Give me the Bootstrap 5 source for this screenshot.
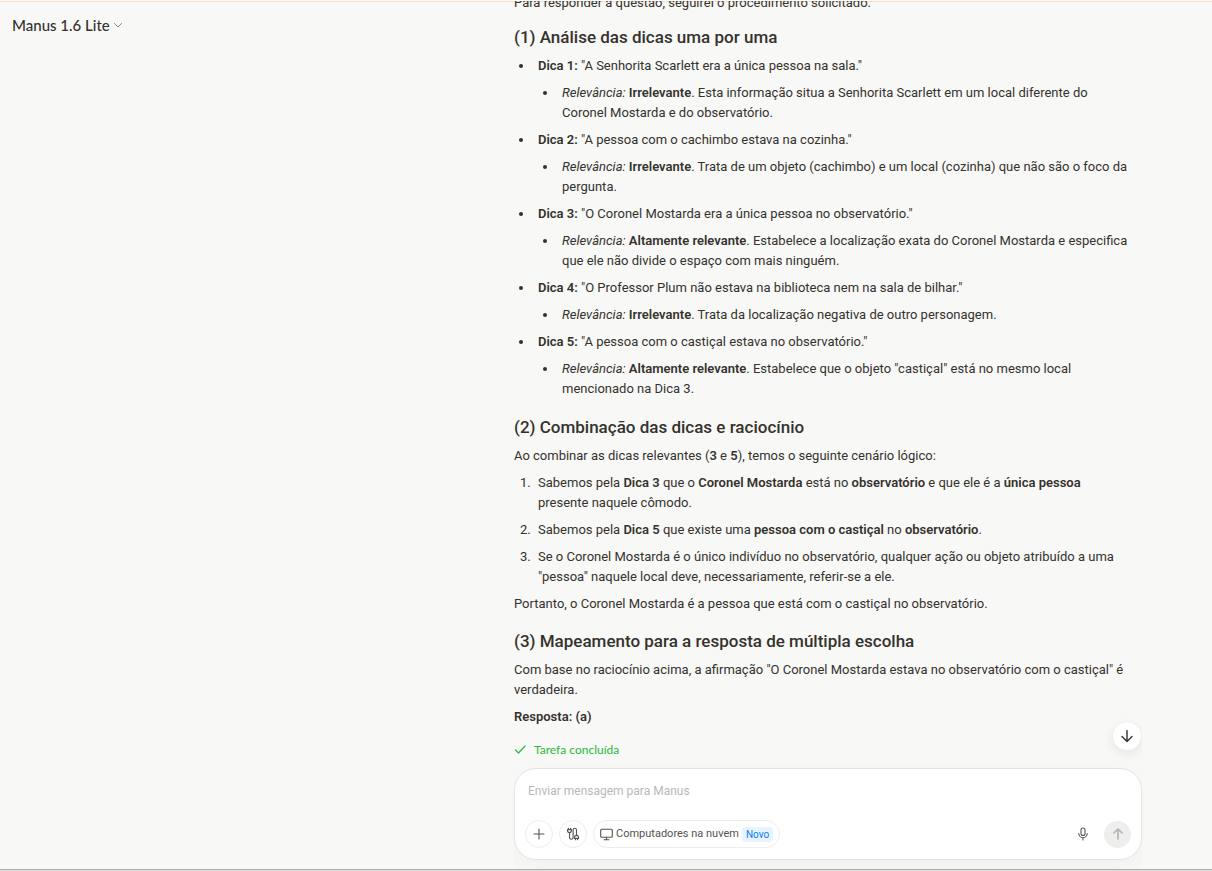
<!DOCTYPE html>
<html lang="pt-BR">
<head>
<meta charset="utf-8">
<meta name="viewport" content="width=device-width, initial-scale=1">
<title>Manus</title>
<link href="https://cdn.jsdelivr.net/npm/bootstrap@5.3.0/dist/css/bootstrap.min.css" rel="stylesheet">
<style>
  body { background: #f8f8f7; color: #34322d; font-family: Roboto, "Open Sans", sans-serif; font-size: 13px; line-height: 20px; }
  .shell { display: grid; grid-template: minmax(0, 1fr) / minmax(0, 514fr) minmax(0, 628px) minmax(0, 70fr); border-top: 1px solid #fcfbf9; border-bottom: 1px solid #dededa; box-shadow: inset 0 1px #f0e0d0, inset 0 -1px #b0b0ad; }
  .model-btn { font-family: Lato, sans-serif; font-size: 15px; line-height: 24px; font-weight: 500; color: #34322d; gap: 2px; }
  .thread { min-height: 0; }
  .thread > * { flex-shrink: 0; }
  .thread h3 { font-size: 17px; line-height: 24px; font-weight: 500; margin: 8px 0 7px; }
  .thread p { margin: 0 0 7px; }
  .thread strong { font-weight: 600; }
  .thread ul, .thread ol { margin: 0; padding-left: 20px; }
  .thread ul { list-style: disc; }
  .thread > ul { margin-bottom: 1px; }
  .thread li { margin-bottom: 7px; padding-left: 4px; }
  .thread li > ul { margin-top: 7px; }
  .thread > ul, .thread > ol { padding-right: 12px; }
  .status-row { padding: 13px 0 8px; }
  .done { color: #25ba3b; font-family: Lato, sans-serif; font-size: 12px; }
  .composer { flex-shrink: 0; border: 1px solid #e4e4e6; border-radius: 22px; box-shadow: 0 10px 24px rgba(0,0,0,.03); min-height: 92px; margin-bottom: 10px; }
  .composer .form-control { font-size: 12px; line-height: 20px; color: #34322d; padding: 12px 13px 0; resize: none; box-shadow: none; }
  .composer .form-control::placeholder { color: #b9b9b7; opacity: 1; }
  .tools { gap: 6px; padding: 0 10px 11px; }
  .tool { width: 28px; height: 28px; border: 1px solid #ededec; color: #535350; }
  .pill { height: 28px; border: 1px solid #ededec; color: #535350; font-size: 11px; line-height: 16px; padding: 0 6px; gap: 3px; }
  .tag-new { background: #e9f3fe; color: #0081f2; font-size: 10px; line-height: 15px; border-radius: 4px; }
  .mic { color: #535350; margin-right: 8px; }
  .send, .send:hover { width: 27px; height: 27px; background: #eeeeed; color: #b5b5b2; }
  .jump { right: 0; bottom: 17px; width: 30px; height: 30px; border: 1px solid #f0f0ef; color: #34322d; box-shadow: 0 4px 10px rgba(0,0,0,.07); }
  svg { fill: none; stroke: currentColor; stroke-linecap: round; stroke-linejoin: round; }
</style>
</head>
<body>
<div class="shell vh-100 overflow-hidden">
  <header class="px-2 pt-2">
    <button type="button" class="btn model-btn border-0 d-flex align-items-center px-1 py-1">Manus 1.6 Lite
      <svg width="12" height="12" viewBox="0 0 12 12"><path stroke="#858481" d="M2.5 4.5 6 8l3.5-3.5"/></svg>
    </button>
  </header>
  <main class="d-flex flex-column overflow-hidden">
    <article class="thread flex-grow-1 d-flex flex-column justify-content-end overflow-hidden">
      <p class="mb-1">Para responder a questão, seguirei o procedimento solicitado.</p>
      <h3>(1) Análise das dicas uma por uma</h3>
      <ul>
        <li><strong>Dica 1:</strong> "A Senhorita Scarlett era a única pessoa na sala."
          <ul><li><em>Relevância:</em> <strong>Irrelevante</strong>. Esta informação situa a Senhorita Scarlett em um local diferente do Coronel Mostarda e do observatório.</li></ul></li>
        <li><strong>Dica 2:</strong> "A pessoa com o cachimbo estava na cozinha."
          <ul><li><em>Relevância:</em> <strong>Irrelevante</strong>. Trata de um objeto (cachimbo) e um local (cozinha) que não são o foco da pergunta.</li></ul></li>
        <li><strong>Dica 3:</strong> "O Coronel Mostarda era a única pessoa no observatório."
          <ul><li><em>Relevância:</em> <strong>Altamente relevante</strong>. Estabelece a localização exata do Coronel Mostarda e especifica que ele não divide o espaço com mais ninguém.</li></ul></li>
        <li><strong>Dica 4:</strong> "O Professor Plum não estava na biblioteca nem na sala de bilhar."
          <ul><li><em>Relevância:</em> <strong>Irrelevante</strong>. Trata da localização negativa de outro personagem.</li></ul></li>
        <li><strong>Dica 5:</strong> "A pessoa com o castiçal estava no observatório."
          <ul><li><em>Relevância:</em> <strong>Altamente relevante</strong>. Estabelece que o objeto "castiçal" está no mesmo local mencionado na Dica 3.</li></ul></li>
      </ul>
      <h3>(2) Combinação das dicas e raciocínio</h3>
      <p>Ao combinar as dicas relevantes (<strong>3</strong> e <strong>5</strong>), temos o seguinte cenário lógico:</p>
      <ol>
        <li>Sabemos pela <strong>Dica 3</strong> que o <strong>Coronel Mostarda</strong> está no <strong>observatório</strong> e que ele é a <strong>única pessoa</strong> presente naquele cômodo.</li>
        <li>Sabemos pela <strong>Dica 5</strong> que existe uma <strong>pessoa com o castiçal</strong> no <strong>observatório</strong>.</li>
        <li>Se o Coronel Mostarda é o único indivíduo no observatório, qualquer ação ou objeto atribuído a uma "pessoa" naquele local deve, necessariamente, referir-se a ele.</li>
      </ol>
      <p>Portanto, o Coronel Mostarda é a pessoa que está com o castiçal no observatório.</p>
      <h3>(3) Mapeamento para a resposta de múltipla escolha</h3>
      <p>Com base no raciocínio acima, a afirmação "O Coronel Mostarda estava no observatório com o castiçal" é verdadeira.</p>
      <p class="mb-0"><strong>Resposta: (a)</strong></p>
    </article>
    <div class="status-row position-relative">
      <div class="done d-flex align-items-center gap-2">
        <svg width="12" height="12" viewBox="0 0 12 12" stroke-width="1.2"><path d="M1.5 6 4.5 9 11 2"/></svg>Tarefa concluída
      </div>
      <button type="button" class="btn jump position-absolute bg-white rounded-circle p-0 d-flex align-items-center justify-content-center" aria-label="Ir para o fim">
        <svg width="14" height="14" viewBox="0 0 14 14" stroke-width="1.4"><path d="M7 1.5v11M2 7.5l5 5 5-5"/></svg>
      </button>
    </div>
    <form class="composer bg-white d-flex flex-column justify-content-between">
      <textarea class="form-control border-0 bg-transparent" rows="1" aria-label="Mensagem" placeholder="Enviar mensagem para Manus"></textarea>
      <div class="tools d-flex align-items-center">
        <button type="button" class="btn tool rounded-circle p-0 d-flex align-items-center justify-content-center" aria-label="Adicionar">
          <svg width="12" height="12" viewBox="0 0 12 12" stroke-width="1.1"><path d="M6 1v10M1 6h10"/></svg>
        </button>
        <button type="button" class="btn tool rounded-circle p-0 d-flex align-items-center justify-content-center" aria-label="Conectores">
          <svg width="14" height="14" viewBox="0 0 14 14" stroke-width="1.1"><path d="M1.5 2.6h4v1a2 2 0 0 1-4 0zM2.5 1.2v1.2M4.5 1.2v1.2M3.5 5.8v4.6a1.8 1.8 0 0 0 3.6 0V3a1.7 1.7 0 0 1 3.4 0v5M8.5 11.4h4v-1a2 2 0 0 0-4 0zM9.5 12.8v-1.2M11.5 12.8v-1.2"/></svg>
        </button>
        <button type="button" class="btn pill rounded-pill d-flex align-items-center">
          <svg width="13" height="13" viewBox="0 0 13 13" stroke-width="1.1"><rect x=".7" y="1.2" width="11.6" height="8" rx="1"/><path d="M6.5 9.2v2.6M4 11.8h5"/></svg>
          <span>Computadores na nuvem</span><span class="tag-new px-1">Novo</span>
        </button>
        <button type="button" class="btn mic border-0 p-0 ms-auto d-flex" aria-label="Ditar">
          <svg width="14" height="14" viewBox="0 0 14 14" stroke-width="1.1"><rect x="5" y="1" width="4" height="7.5" rx="2"/><path d="M2.8 6.5a4.2 4.2 0 0 0 8.4 0M7 11v2"/></svg>
        </button>
        <button type="submit" class="btn send border-0 rounded-circle p-0 d-flex align-items-center justify-content-center" aria-label="Enviar">
          <svg width="14" height="14" viewBox="0 0 14 14" stroke-width="1.7"><path d="M7 12V2.5M3 6l4-4 4 4"/></svg>
        </button>
      </div>
    </form>
  </main>
</div>
<script src="https://cdn.jsdelivr.net/npm/bootstrap@5.3.0/dist/js/bootstrap.bundle.min.js"></script>
</body>
</html>
